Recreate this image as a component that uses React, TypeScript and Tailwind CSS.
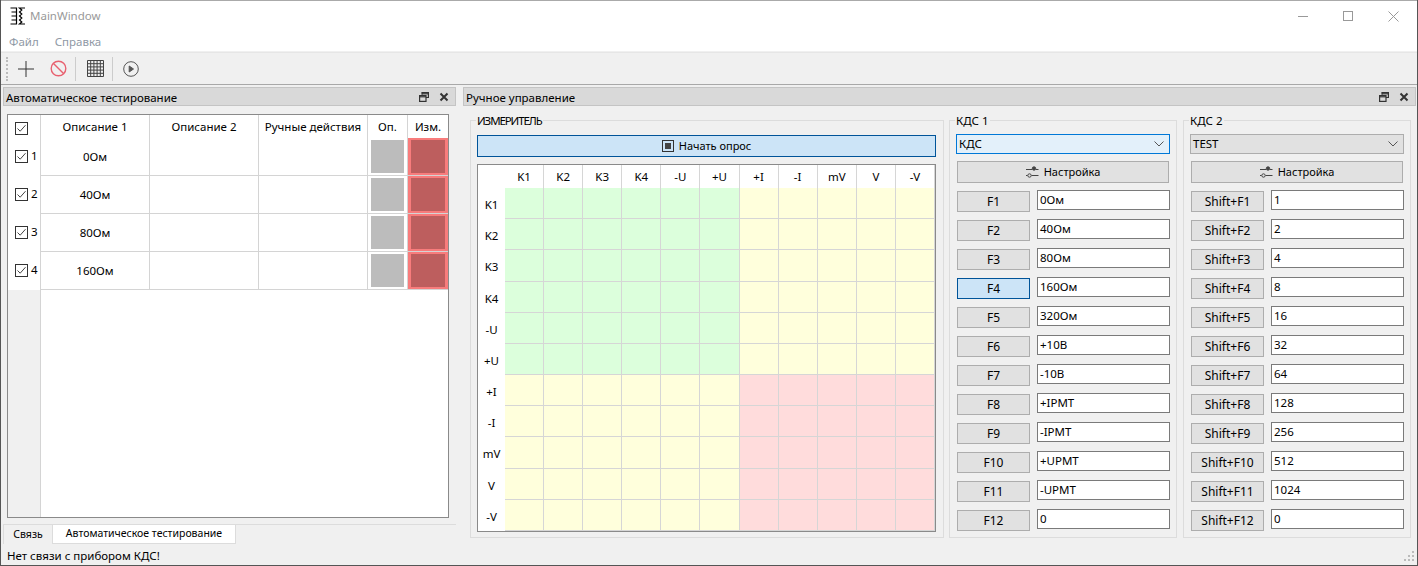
const font = "Noto Sans"

const descriptions = ["0Ом", "40Ом", "80Ом", "160Ом"]
const kds1 = ["0Ом", "40Ом", "80Ом", "160Ом", "320Ом", "+10В", "-10В", "+IPMT", "-IPMT", "+UPMT", "-UPMT", "0"]
const kds2 = ["1", "2", "4", "8", "16", "32", "64", "128", "256", "512", "1024", "0"]
const matrixHeaders = ["K1", "K2", "K3", "K4", "-U", "+U", "+I", "-I", "mV", "V", "-V"]

function Check() {
  return (
    <span className="w-[13px] h-[13px] border border-[#333] bg-white flex items-center justify-center shrink-0">
      <svg width="11" height="11" viewBox="0 0 11 11" fill="none" stroke="#444" strokeWidth="1">
        <path d="M1.5 5.5 L4.2 8.2 L9.5 2.2" />
      </svg>
    </span>
  )
}

function DockTitle({ title, className }: { title: string; className: string }) {
  return (
    <div className={`h-[19px] bg-[#d9d9d9] border border-[#c4c4c4] flex items-center justify-between pl-[2px] text-[11.5px] text-black ${className}`}>
      <span className="pt-[3px]">{title}</span>
      <div className="flex items-center gap-[10px] pr-[6px]">
        <svg width="10" height="10" viewBox="0 0 10 10" fill="none" stroke="#333" strokeWidth="1.2">
          <path d="M3 2.8 V0.6 H9.4 V5.5 H7" />
          <path d="M3 1.8 H9.4" />
          <rect x="0.6" y="3.6" width="6.4" height="5.8" />
          <path d="M0.6 4.8 H7" />
        </svg>
        <svg width="10" height="10" viewBox="0 0 10 10" fill="none" stroke="#333" strokeWidth="2">
          <path d="M1.5 1.5 L8.5 8.5 M8.5 1.5 L1.5 8.5" />
        </svg>
      </div>
    </div>
  )
}

function AutoTable() {
  return (
    <div className="mx-[4px] mt-[8px] h-[404px] w-[442px] border border-[#8a8a8a] bg-white flex text-[11.5px] text-black">
      <div className="w-[33px] bg-[#f0f0f0] flex flex-col">
        <div className="h-[23px] bg-white pl-[7px] pt-[7px]">
          <Check />
        </div>
        {[1, 2, 3, 4].map((n) => (
          <div key={n} className="h-[38px] bg-white pl-[7px] flex items-center gap-[3px] pb-[2px]">
            <Check />
            <span>{n}</span>
          </div>
        ))}
      </div>
      <div className="flex-1 flex flex-col border-l border-[#d4d4d4]">
        <div className="h-[23px] grid grid-cols-[109px_109px_109px_40px_40px] text-center leading-[24px]">
          <div className="border-r border-[#d4d4d4]">Описание 1</div>
          <div className="border-r border-[#d4d4d4]">Описание 2</div>
          <div className="border-r border-[#d4d4d4]">Ручные действия</div>
          <div className="border-r border-[#d4d4d4]">Оп.</div>
          <div>Изм.</div>
        </div>
        {descriptions.map((d) => (
          <div key={d} className="h-[38px] grid grid-cols-[109px_109px_109px_40px_40px] border-b border-[#d4d4d4]">
            <div className="border-r border-[#d4d4d4] flex items-center justify-center">{d}</div>
            <div className="border-r border-[#d4d4d4]" />
            <div className="border-r border-[#d4d4d4]" />
            <div className="border-r border-[#d4d4d4] pl-[3px] pt-[2px]">
              <div className="w-[33px] h-[33px] bg-[#bcbcbc]" />
            </div>
            <div className="bg-[#f87c7c] px-[3px] py-[2px]">
              <div className="w-full h-full bg-[#bd5e5e]" />
            </div>
          </div>
        ))}
      </div>
    </div>
  )
}

function GroupBox({ title, className, titleClass, children }: { title: string; className: string; titleClass?: string; children: React.ReactNode }) {
  return (
    <div className={`relative mt-[14px] h-[418px] border border-[#dcdcdc] ${className}`}>
      <span className={`absolute left-[5px] -top-[8px] bg-[#f0f0f0] px-px text-[11.5px] leading-[16px] text-black ${titleClass ?? ""}`}>{title}</span>
      {children}
    </div>
  )
}

function Matrix() {
  return (
    <div className="mt-[7px] w-[459px] h-[368px] border border-[#8a8a8a] bg-white flex text-[11.5px] text-black">
      <div className="w-[27px] flex flex-col">
        <div className="h-[23px]" />
        {matrixHeaders.map((h) => (
          <div key={h} className="flex-1 flex items-center justify-center pt-[2px]">{h}</div>
        ))}
      </div>
      <div className="flex-1 grid grid-cols-[repeat(11,1fr)] grid-rows-[23px_repeat(11,1fr)]">
        {matrixHeaders.map((h) => (
          <div key={h} className="flex items-center justify-center border-r border-[#d6d6d6]">{h}</div>
        ))}
        {matrixHeaders.map((_, r) =>
          matrixHeaders.map((_, c) => (
            <div
              key={`${r}-${c}`}
              className={`border-r border-b border-[#d6d6d6] ${
                r < 6 ? (c < 6 ? "bg-[#dcffdc]" : "bg-[#ffffdc]") : c < 6 ? "bg-[#ffffdc]" : "bg-[#ffdcdc]"
              }`}
            />
          ))
        )}
      </div>
    </div>
  )
}

function SettingsIcon() {
  return (
    <svg width="13" height="12" viewBox="0 0 13 12" fill="none" stroke="#444" strokeWidth="1">
      <path d="M0 3.5 H6 M10 3.5 H12.5" />
      <circle cx="8" cy="2.5" r="1.7" fill="#444" />
      <path d="M0 9.5 H1.5 M5.5 9.5 H12.5" />
      <circle cx="3.5" cy="9.5" r="1.7" />
    </svg>
  )
}

function KdsPanel({ title, combo, focused, prefix, values, active }: { title: string; combo: string; focused: boolean; prefix: string; values: string[]; active?: number }) {
  return (
    <GroupBox title={title} className="w-[228px]">
      <div className="pl-[6px] pt-[13px] text-[11.5px] text-black">
        <div className={`h-[20px] w-[214px] flex items-center justify-between pl-[2px] pr-[5px] border ${focused ? "bg-[#e3f0fa] border-[#0078d7]" : "bg-[#e1e1e1] border-[#adadad]"}`}>
          <span>{combo}</span>
          <svg width="10" height="6" viewBox="0 0 10 6" fill="none" stroke="#555" strokeWidth="1">
            <path d="M0.5 0.5 L5 5 L9.5 0.5" />
          </svg>
        </div>
        <div className="ml-px mt-[7px] h-[22px] w-[212px] bg-[#e1e1e1] border border-[#adadad] flex items-center justify-center gap-[5px]">
          <SettingsIcon />
          <span className="text-[11px]">Настройка</span>
        </div>
        <div className="mt-[7px] flex flex-col">
          {values.map((v, i) => (
            <div key={i} className="h-[29px] flex items-start gap-[7px]">
              <div className={`ml-px mt-px w-[73px] h-[21px] border flex items-center justify-center text-[12px] ${active === i ? "bg-[#cce4f7] border-[#005499]" : "bg-[#e1e1e1] border-[#adadad]"}`}>
                {prefix}F{i + 1}
              </div>
              <div className="w-[133px] h-[20px] bg-white border border-[#7a7a7a] flex items-center pl-[2px]">{v}</div>
            </div>
          ))}
        </div>
      </div>
    </GroupBox>
  )
}

export default function App() {
  return (
    <div className="w-[1418px] h-[566px] overflow-hidden bg-[#f0f0f0] flex flex-col border-x border-b border-[#555]" style={{ fontFamily: `"${font}", sans-serif` }}>
      {/* Title bar + menu */}
      <div className="h-[31px] bg-white flex items-center justify-between border-t border-[#aaa]">
        <div className="flex items-center pl-[9px] gap-[4px]">
          <svg width="16" height="18" viewBox="0 0 16 18" fill="none" stroke="#000" strokeWidth="1.2">
            <path d="M0.5 1 H6.5 M1.5 5 H6.5 M1.5 9 H6.5 M1.5 13 H6.5 M0.5 17 H6.5 M6.5 0.5 V17.5" />
            <path d="M15 1 H9.5 L11.8 3 L9.5 5 L11.8 7 L9.5 9 L11.8 11 L9.5 13 L11.8 15 L9.5 17 H15" />
          </svg>
          <span className="text-[11.5px] text-[#999]">MainWindow</span>
        </div>
        <div className="flex items-center pr-[18px] gap-[35px]">
          <div className="w-[10px] h-px bg-[#999]" />
          <div className="w-[10px] h-[10px] border border-[#999]" />
          <svg width="11" height="11" viewBox="0 0 11 11" stroke="#999" strokeWidth="1">
            <path d="M0.5 0.5 L10.5 10.5 M10.5 0.5 L0.5 10.5" />
          </svg>
        </div>
      </div>
      <div className="h-[20px] bg-white flex items-center gap-[16px] pl-[8px] pt-[2px] text-[11.5px] text-[#8f99a5]">
        <span>Файл</span>
        <span>Справка</span>
      </div>

      {/* Toolbar */}
      <div className="mt-px h-[33px] border-t border-b border-[#e6e6e6] border-b-[#a8a8a8] flex items-center bg-[#f0f0f0]">
        <div className="ml-[5px] w-[3px] h-[24px] border-l-2 border-dotted border-[#bbb]" />
        <div className="ml-[4px] w-[26px] flex justify-center">
          <svg width="16" height="16" viewBox="0 0 16 16" stroke="#333" strokeWidth="1">
            <path d="M8 0 V16 M0 8 H16" />
          </svg>
        </div>
        <div className="ml-[9px] w-[20px] flex justify-center">
          <svg width="17" height="17" viewBox="0 0 17 17" fill="none" stroke="#e8606f" strokeWidth="1.4">
            <circle cx="8.5" cy="8.5" r="7.3" />
            <path d="M3.5 3.5 L13.5 13.5" />
          </svg>
        </div>
        <div className="ml-[7px] w-px h-[24px] bg-[#ccc]" />
        <div className="ml-[11px]">
          <svg width="17" height="17" viewBox="0 0 17 17" fill="none" stroke="#444" strokeWidth="1">
            <path d="M0.5 0.5 H16.5 V16.5 H0.5 Z M0.5 3.7 H16.5 M0.5 6.9 H16.5 M0.5 10.1 H16.5 M0.5 13.3 H16.5 M3.7 0.5 V16.5 M6.9 0.5 V16.5 M10.1 0.5 V16.5 M13.3 0.5 V16.5" />
          </svg>
        </div>
        <div className="ml-[8px] w-px h-[24px] bg-[#ccc]" />
        <div className="ml-[10px]">
          <svg width="16" height="16" viewBox="0 0 16 16" fill="none" stroke="#555" strokeWidth="1">
            <circle cx="8" cy="8" r="7.3" />
            <path d="M6.2 5 L10.5 8 L6.2 11 Z" fill="#555" />
          </svg>
        </div>
      </div>

      {/* Docks */}
      <div className="flex-1 flex mt-[2px]">
        <div className="w-[461px] flex flex-col">
          <DockTitle title="Автоматическое тестирование" className="ml-[2px] w-[453px]" />
          <div className="ml-[2px]">
            <AutoTable />
          </div>
          <div className="mt-[6px] ml-[2px] w-[453px] h-[20px] border-t border-[#dcdcdc] flex text-[10.5px] text-black">
            <div className="w-[50px] bg-[#f0f0f0] border-x border-[#dcdcdc] flex items-center justify-center">Связь</div>
            <div className="w-[183px] bg-white border-r border-b border-[#dcdcdc] flex items-center justify-center">Автоматическое тестирование</div>
          </div>
        </div>
        <div className="flex-1 flex flex-col">
          <DockTitle title="Ручное управление" className="ml-px w-[953px]" />
          <div className="flex gap-[5px] pl-[8px]">
            <GroupBox title="ИЗМЕРИТЕЛЬ" titleClass="tracking-[-1.1px]" className="w-[474px]">
              <div className="pl-[6px] pt-[14px] text-[11px] text-black">
                <div className="w-[459px] h-[22px] bg-[#cce4f7] border border-[#005499] flex items-center justify-center gap-[5px]">
                  <span className="w-[12px] h-[12px] border border-[#333] flex items-center justify-center">
                    <span className="w-[6px] h-[6px] bg-[#444]" />
                  </span>
                  <span>Начать опрос</span>
                </div>
                <Matrix />
              </div>
            </GroupBox>
            <KdsPanel title="КДС 1" combo="КДС" focused prefix="" values={kds1} active={3} />
            <div className="ml-px">
              <KdsPanel title="КДС 2" combo="TEST" focused={false} prefix="Shift+" values={kds2} />
            </div>
          </div>
        </div>
      </div>

      {/* Status bar */}
      <div className="h-[20px] flex items-center justify-between pl-[6px] pr-[2px] pt-[2px] text-[11.5px] text-black">
        <span>Нет связи с прибором КДС!</span>
        <svg width="11" height="11" viewBox="0 0 11 11" fill="#bbb">
          <rect x="8" y="0" width="2" height="2" />
          <rect x="4" y="4" width="2" height="2" />
          <rect x="8" y="4" width="2" height="2" />
          <rect x="0" y="8" width="2" height="2" />
          <rect x="4" y="8" width="2" height="2" />
          <rect x="8" y="8" width="2" height="2" />
        </svg>
      </div>
    </div>
  )
}
